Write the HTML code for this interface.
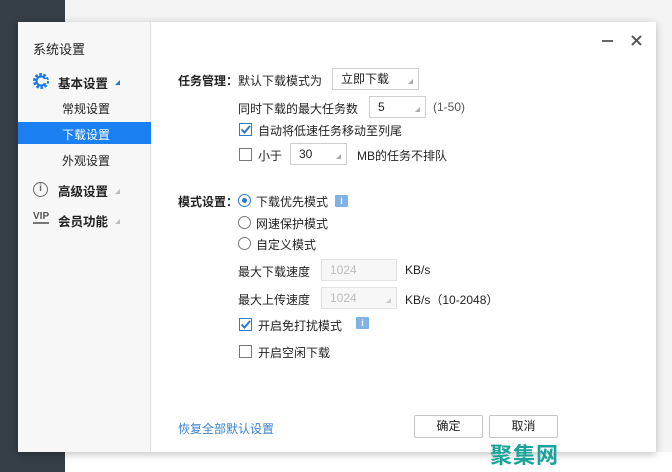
<!DOCTYPE html>
<html><head><meta charset="utf-8"><style>
*{margin:0;padding:0;box-sizing:border-box}
body{width:672px;height:472px;position:relative;overflow:hidden;background:#f4f4f4;font-family:"Liberation Sans","Noto Sans CJK SC",sans-serif;font-size:12px;color:#222}
.dark{position:absolute;left:0;top:0;width:65px;height:472px;background:#353d46}
.dark2{position:absolute;left:0;top:0;width:65px;height:26px;background:#2d3136}
.bot{position:absolute;left:65px;top:452px;width:607px;height:20px;background:#fff}
.dlg{position:absolute;left:18px;top:22px;width:638px;height:430px;background:#fff;box-shadow:0 2px 8px rgba(0,0,0,.25)}
.side{position:absolute;left:0;top:0;width:133px;height:430px;background:#f7f7f7;border-right:1px solid #e2e2e2}
.t{position:absolute;white-space:nowrap}
.sel{position:absolute;left:0;top:100px;width:133px;height:22px;background:#1a7ff0}
.b{font-weight:bold}
.box{position:absolute;border:1px solid #cfcfcf;background:#fff;height:22px;line-height:20px;padding-left:8px}
.tri{position:absolute;right:5px;bottom:5px;width:0;height:0;border-left:5px solid transparent;border-bottom:5px solid #aaa}
.cb{position:absolute;width:13px;height:13px;border:1px solid #777;background:#fff}
.rd{position:absolute;width:13px;height:13px;border:1px solid #777;border-radius:50%;background:#fff}
.info{position:absolute;width:13px;height:12px;background:#7fb3e6;border-radius:1px;color:#fff;font-size:9px;text-align:center;line-height:12px;font-weight:bold}
.btn{position:absolute;width:69px;height:23px;border:1px solid #c4c4c4;border-radius:2px;background:#fff;text-align:center;line-height:21px}
</style></head><body>
<div class="dark2"></div><div class="dark"></div><div class="bot"></div>
<div class="dlg">
<div class="side">
<div class="t" style="left:15px;top:17px;font-size:13px">系统设置</div>
<svg class="t" style="left:14px;top:50px" width="18" height="18" viewBox="0 0 18 18"><circle cx="9" cy="9" r="6.5" fill="none" stroke="#1a78e0" stroke-width="3" stroke-dasharray="2.5 1.6"/><circle cx="9" cy="9" r="4.5" fill="none" stroke="#1a78e0" stroke-width="2"/><rect x="9" y="7" width="6" height="4" fill="#f7f7f7"/></svg>
<div class="t b" style="left:40px;top:51px;font-size:12.5px">基本设置</div>
<div class="t" style="left:97px;top:58px;border-left:5px solid transparent;border-bottom:5px solid #2c72c8"></div>
<div class="t" style="left:44px;top:78px">常规设置</div>
<div class="sel"></div>
<div class="t" style="left:44px;top:104px;color:#fff">下载设置</div>
<div class="t" style="left:44px;top:130px">外观设置</div>
<div class="t" style="left:15px;top:160px;width:15px;height:15px;border:1.5px solid #666;border-radius:50%;font-size:10px;text-align:center;line-height:12px;font-weight:bold;color:#666">i</div>
<div class="t b" style="left:40px;top:159px;font-size:12.5px">高级设置</div>
<div class="t" style="left:97px;top:167px;border-left:5px solid transparent;border-bottom:5px solid #bbb"></div>
<div class="t" style="left:15px;top:189px;font-size:10px;color:#555;font-weight:bold;border-bottom:2px solid #777;line-height:11px">VIP</div>
<div class="t b" style="left:40px;top:189px;font-size:12.5px">会员功能</div>
<div class="t" style="left:97px;top:197px;border-left:5px solid transparent;border-bottom:5px solid #bbb"></div>
</div>
<div class="t" style="left:584px;top:18px;width:11px;height:2px;background:#666"></div>
<svg class="t" style="left:613px;top:13px" width="11" height="11" viewBox="0 0 11 11"><path d="M1 1L10 10M10 1L1 10" stroke="#555" stroke-width="2"/></svg>

<div class="t b" style="left:160px;top:50px">任务管理：</div>
<div class="t" style="left:220px;top:50px">默认下载模式为</div>
<div class="box" style="left:314px;top:46px;width:87px">立即下载<span class="tri"></span></div>
<div class="t" style="left:220px;top:78px">同时下载的最大任务数</div>
<div class="box" style="left:351px;top:74px;width:57px">5<span class="tri"></span></div>
<div class="t" style="left:415px;top:78px;color:#555">(1-50)</div>
<div class="cb" style="left:221px;top:101px;border-color:#2a7ad0"></div><svg class="t" style="left:221px;top:101px" width="13" height="13" viewBox="0 0 13 13"><path d="M2.5 6.5L5.5 9.5L11 3" stroke="#2a7ad0" stroke-width="2" fill="none"/></svg>
<div class="t" style="left:240px;top:100px">自动将低速任务移动至列尾</div>
<div class="cb" style="left:221px;top:126px"></div>
<div class="t" style="left:240px;top:125px">小于</div>
<div class="box" style="left:272px;top:121px;width:57px">30<span class="tri"></span></div>
<div class="t" style="left:339px;top:125px">MB的任务不排队</div>

<div class="t b" style="left:160px;top:171px">模式设置：</div>
<div class="rd" style="left:220px;top:172px;border-color:#2a7ad0"></div><div class="t" style="left:224px;top:176px;width:5px;height:5px;border-radius:50%;background:#2a7ad0"></div>
<div class="t" style="left:238px;top:171px">下载优先模式</div>
<div class="info" style="left:317px;top:173px">i</div>
<div class="rd" style="left:220px;top:194px"></div><div class="t" style="left:238px;top:193px">网速保护模式</div>
<div class="rd" style="left:220px;top:215px"></div><div class="t" style="left:238px;top:214px">自定义模式</div>
<div class="t" style="left:220px;top:241px">最大下载速度</div>
<div class="box" style="left:303px;top:237px;width:76px;background:#f7f7f7;border-color:#e2e2e2;color:#bbb">1024</div>
<div class="t" style="left:387px;top:241px">KB/s</div>
<div class="t" style="left:220px;top:269px">最大上传速度</div>
<div class="box" style="left:303px;top:265px;width:76px;background:#f7f7f7;border-color:#e2e2e2;color:#bbb">1024<span class="tri" style="border-bottom-color:#ccc"></span></div>
<div class="t" style="left:387px;top:269px">KB/s（10-2048）</div>
<div class="cb" style="left:221px;top:296px;border-color:#2a7ad0"></div><svg class="t" style="left:221px;top:296px" width="13" height="13" viewBox="0 0 13 13"><path d="M2.5 6.5L5.5 9.5L11 3" stroke="#2a7ad0" stroke-width="2" fill="none"/></svg>
<div class="t" style="left:240px;top:295px">开启免打扰模式</div>
<div class="info" style="left:338px;top:295px">i</div>
<div class="cb" style="left:221px;top:323px"></div>
<div class="t" style="left:240px;top:322px">开启空闲下载</div>

<div class="t" style="left:160px;top:398px;color:#3a82cc">恢复全部默认设置</div>
<div class="btn" style="left:396px;top:393px">确定</div>
<div class="btn" style="left:471px;top:393px">取消</div>
</div>
<div class="t" style="left:490px;top:438px;font-size:22px;font-weight:bold;color:#1aa39a;letter-spacing:1px">聚集网</div>
</body></html>
